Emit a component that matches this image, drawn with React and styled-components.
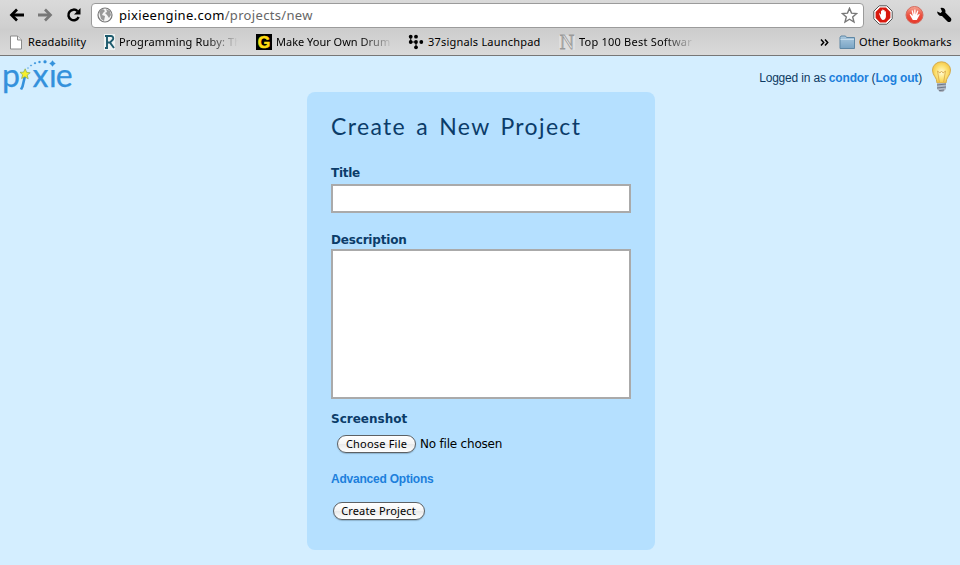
import React from "react";
import styled, { createGlobalStyle } from "styled-components";

const Global = createGlobalStyle`
  * { box-sizing: border-box; }
  body { margin: 0; background: #d4eeff; overflow: hidden; }
  svg { display: block; flex: none; }
`;
const Screen = styled.div`
  width: 960px; height: 565px; background: #d4eeff; color: #000;
  font-family: "Noto Sans", "Open Sans", sans-serif;
`;
const Chrome = styled.header`
  height: 56px; border-bottom: 1px solid #777;
  background: linear-gradient(#dadada, #cfcfcf 28px, #cdcdcd 29px, #dadada);
`;
const Toolbar = styled.div`
  height: 28px; display: flex; align-items: center; padding: 2px 8px 0 8px;
`;
const NavIcon = styled.div`
  width: 28px; display: flex; justify-content: flex-start;
`;
const AddressBar = styled.div`
  width: 773px; height: 25px; margin-left: -1px; display: flex; align-items: center;
  padding: 0 5px; background: #fff; border: 1px solid #9b9b9b; border-radius: 4px;
`;
const Url = styled.span`
  flex: 1; margin-left: 6px; white-space: nowrap; color: #666;
  font-size: 13px; line-height: 18px; letter-spacing: 0.33px; padding-bottom: 1px;
  b { font-weight: 400; color: #000; }
`;
const Extensions = styled.div`
  flex: 1; display: flex; align-items: center; justify-content: space-between; padding-left: 9px;
`;
const BookmarkBar = styled.nav`
  height: 27px; display: flex; align-items: center; padding: 1px 8px 0 9px;
`;
const Bookmark = styled.div`
  display: flex; align-items: center; flex: none; width: ${(p) => p.$width}px;
`;
const BookmarkLabel = styled.span`
  margin-left: ${(p) => p.$gap ?? 4}px; white-space: nowrap; font-size: 11px; line-height: 16px;
  letter-spacing: ${(p) => p.$spacing || 0}px;
  mask-image: ${(p) => (p.$fade ? `linear-gradient(90deg, #000 ${p.$fade - 32}px, transparent ${p.$fade}px)` : "none")};
`;
const Spacer = styled.div`flex: 1;`;
const PageHeader = styled.div`
  height: 36px; display: flex; justify-content: space-between; padding: 0 8px 0 0;
`;
const Account = styled.div`
  display: flex; align-items: flex-start; color: #0d3a62;
  font: 12px/16px "Liberation Sans", sans-serif;
`;
const AccountText = styled.div`
  margin: 14px 9px 0 0; white-space: nowrap; letter-spacing: -0.18px;
`;
const Link = styled.a`
  color: #1c7fdc; font-weight: 700; text-decoration: none;
`;
const Card = styled.form`
  width: 348px; height: 458px; margin: 0 0 0 307px; padding: 19px 24px;
  display: flex; flex-direction: column; align-items: flex-start;
  background: #b5e0ff; border-radius: 8px;
`;
const Heading = styled.h1`
  margin: 0 0 24px; height: 30px; white-space: nowrap; color: #0b3c69;
  font: 400 23px/30px Lato, sans-serif; letter-spacing: 1.35px; word-spacing: 3px;
`;
const Label = styled.label`
  height: 16px; color: #0b3c69; font: 700 12px/16px "DejaVu Sans", sans-serif;
  letter-spacing: ${(p) => p.$spacing || 0}px;
`;
const TitleInput = styled.input`
  width: 300px; height: 29px; margin: 3px 0 19px; padding: 3px;
  border: 2px solid #aaa; border-radius: 0; background: #fff; outline: none;
`;
const DescriptionInput = styled.textarea`
  width: 300px; height: 150px; margin: 1px 0 12px; padding: 3px; resize: none;
  border: 2px solid #aaa; border-radius: 0; background: #fff; outline: none;
`;
const FileRow = styled.div`
  display: flex; align-items: center; height: 20px; margin: 7px 0 17px 6px;
`;
const FileName = styled.span`
  margin-left: 4px; white-space: nowrap; font: 12px/16px "DejaVu Sans", sans-serif; letter-spacing: -0.2px;
`;
const PillButton = styled.button`
  display: block; width: ${(p) => p.$width}px; height: 18px; padding: 0 0 2px; white-space: nowrap; color: #000;
  border: 1px solid #5d6164; border-radius: 9px; box-shadow: 0 1px 1px #6d8ca388;
  background: linear-gradient(#fff, #f4f4f4 50%, #e9e9e9 51%, #fff);
  font: 11px/15px "Noto Sans", sans-serif; letter-spacing: ${(p) => p.$spacing || 0}px;
`;
const AdvancedLink = styled(Link)`
  margin-bottom: 15px; font: 700 12px/16px "Liberation Sans", sans-serif; letter-spacing: -0.22px;
`;
const SubmitRow = styled.div`padding-left: 1.5px;`;

const Arrow = ({ color, flip }) => (
  <svg width="18" height="16" viewBox="0 0 18 16">
    <g transform={flip ? "translate(18 0) scale(-1 1)" : undefined} fill="none" stroke={color}>
      <path d="M4 8H16" strokeWidth="3" /><path d="M9 2.5L3.5 8L9 13.5" strokeWidth="2.7" />
    </g>
  </svg>
);
const Reload = () => (
  <svg width="18" height="16" viewBox="-1 0 18 16">
    <path d="M12.5 4.2A5.3 5.3 0 1 0 13.6 10" fill="none" stroke="#000" strokeWidth="2.5" />
    <path d="M15.5 1V7.5H9Z" />
  </svg>
);
const Globe = () => (
  <svg width="16" height="16" viewBox="0 0 16 16">
    <circle cx="8" cy="8" r="7" fill="#f5f5f5" stroke="#777" strokeWidth="1.2" />
    <path d="M2 4L6 2L8 4L6 6L5 8L8 9L7 14L4 12L3 8Z M9 2L13 4L14 8L12 11L10 8L8 6L10 5Z" fill="#999" />
  </svg>
);
const Star = () => (
  <svg width="17" height="17" viewBox="0 0 17 17">
    <path d="M8.5 1.3L10.5 6.1L15.7 6.5L11.7 9.9L13 15L8.5 12.2L4 15L5.3 9.9L1.3 6.5L6.5 6.1Z" fill="#fff" stroke="#777" strokeWidth="1.4" />
  </svg>
);
const handPath = "M6 10L5 7.5Q5.6 6.7 6.4 8L7 8.8V5Q7.6 4.2 8.2 5V8V3.8Q8.8 3 9.4 3.8V8V4.2Q10 3.6 10.6 4.3V8.2V5.5Q11.3 4.8 11.9 5.5V11Q11.2 14 9 14Q7 13.7 6 10Z";
const StopHand = () => (
  <svg width="20" height="20" viewBox="0 0 20 20">
    <path d="M6.2 .8H13.8L19.2 6.2V13.8L13.8 19.2H6.2L.8 13.8V6.2Z" fill="#fff" stroke="#555" />
    <path d="M7 2.6H13L17.4 7V13L13 17.4H7L2.6 13V7Z" fill="#d8180d" />
    <path d={handPath} fill="#fff" transform="translate(1 1)" />
  </svg>
);
const RoundHand = () => (
  <svg width="19" height="20" viewBox="0 0 19 20">
    <defs><linearGradient id="rh" x2="0" y2="1"><stop stopColor="#f7a896" /><stop offset=".5" stopColor="#ec5140" /><stop offset="1" stopColor="#e6372a" /></linearGradient></defs>
    <circle cx="9.5" cy="10" r="8.5" fill="url(#rh)" stroke="#d46b5e" />
    <path d="M7.8 15L4.6 9.5L5.5 8.8L7.7 11L6.6 5.5L7.7 5.2L9 9.5L9.3 4.6H10.5L10.6 9.5L12.3 5.5L13.3 6L12.2 10.5L14.2 8.8L14.8 9.6L11.8 15Z" fill="#fff" />
  </svg>
);
const Wrench = () => (
  <svg width="16" height="16" viewBox="0 0 16 16">
    <path d="M1 4.5L4.6 6L6 4.4L4.5 .9Q8.6 .1 9.5 4.1L9.3 5.6L15 11.2Q16 13 14.6 14.4Q13 15.6 11.5 14.4L6 8.9Q2 9.5 1 4.5Z" />
  </svg>
);
const PageIcon = () => (
  <svg width="14" height="15" viewBox="0 0 14 15">
    <path d="M1.5 1H8.5L12.5 5V14H1.5Z" fill="#fff" stroke="#8b8b8b" /><path d="M8.5 1V5H12.5" fill="#eee" stroke="#8b8b8b" />
  </svg>
);
const RIcon = () => (
  <svg width="11" height="16" viewBox="0 0 11 16">
    <path d="M0 0H11V16H0Z" fill="#eef2f2" />
    <path d="M1 2H7Q10 2.5 9 5.5L6 8.5L10 14M3 2V14M1 14H4M3 8.5H6" fill="none" stroke="#1d5a6c" strokeWidth="1.9" />
  </svg>
);
const GIcon = () => (
  <svg width="16" height="16" viewBox="0 0 16 16">
    <path d="M0 0H16V16H0Z" />
    <text x="8" y="13.6" textAnchor="middle" fontFamily="Liberation Sans" fontWeight="700" fontSize="16" fill="#ffdd13" stroke="#ffdd13" strokeWidth=".6">G</text>
  </svg>
);
const dots = [[2.7, 2.7], [8, 2.7], [2.7, 8], [8, 8], [13.3, 8], [8, 13.3]];
const DotsIcon = () => (
  <svg width="16" height="16" viewBox="0 0 16 16">
    <path d="M2.7 2.7V8H8V13.3" fill="none" stroke="#222" strokeWidth="1.2" />
    {dots.map(([x, y]) => <circle key={x + "-" + y} cx={x} cy={y} r="1.9" />)}
  </svg>
);
const NIcon = () => (
  <svg width="16" height="17" viewBox="0 0 16 17">
    <path d="M0 1H16V16H0Z" fill="#dedede" />
    <text x="8" y="15" textAnchor="middle" fontFamily="Liberation Serif" fontSize="20" fill="#eee" stroke="#999" strokeWidth=".8">N</text>
  </svg>
);
const Folder = () => (
  <svg width="17" height="15" viewBox="0 0 17 15">
    <defs><linearGradient id="fo" x2="0" y2="1"><stop stopColor="#abc9df" /><stop offset="1" stopColor="#79a4c4" /></linearGradient></defs>
    <path d="M1 13.5V2.5L2 1H6.5L7.5 2.5H15.5V13.5Z" fill="url(#fo)" stroke="#5e87a5" /><path d="M1.5 4.5H15" stroke="#c5dceb" />
  </svg>
);
const Logo = () => (
  <svg width="80" height="40" viewBox="0 0 80 40">
    <g fill="#3391dc" stroke="#3391dc" strokeWidth=".25" fontFamily="Lato" fontSize="32">
      <text x="1.9" y="30.5">p</text><text x="32.5" y="30.5">x</text><text x="49" y="30.5">ı</text><text x="55.7" y="30.5">e</text>
      <circle cx="28" cy="12" r=".5" /><circle cx="31" cy="9.5" r=".7" /><circle cx="35" cy="7.2" r=".9" /><circle cx="39.5" cy="6" r="1.1" /><circle cx="45" cy="5.7" r="1.5" />
      <path d="M52.5 4.5L53.8 6.2L55.5 7.5L53.8 8.8L52.5 10.5L51.2 8.8L49.5 7.5L51.2 6.2Z" />
    </g>
    <path d="M25 20L22.5 30.5L21 33.5" fill="none" stroke="#3391dc" strokeWidth="2.6" />
    <path d="M25.2 12.8L26.6 16.3L30.2 16.8L27.2 19.1L28.2 22.8L24.9 20.7L21.6 22.5L22.6 18.8L20 16.3L23.5 16.2Z" fill="#f7ef2b" stroke="#86a84e" strokeWidth=".7" />
  </svg>
);
const Bulb = () => (
  <svg width="21" height="38" viewBox="0 -1 21 38">
    <defs><radialGradient id="bu"><stop stopColor="#fffbd9" /><stop offset=".55" stopColor="#fde57c" /><stop offset="1" stopColor="#f6cb49" /></radialGradient></defs>
    <path d="M6 26C6 20 1.5 19 1.5 13A9 8.2 0 0 1 19.5 13C19.5 19 15 20 15 26Z" fill="url(#bu)" stroke="#d3ab50" />
    <path d="M8.3 25L6.5 14L9 16L10.5 14L12 16L14.5 14L12.7 25" fill="none" stroke="#d6a648" strokeWidth=".8" />
    <path d="M6 26H15V32L12 35H9L6 32Z" fill="#b0b8c3" /><path d="M6 28L15 27M6 31L15 30M8 33.7L13 33" stroke="#6d7787" />
  </svg>
);

export default function App() {
  return (
    <Screen>
      <Global />
      <Chrome>
        <Toolbar>
          <NavIcon><Arrow color="#000" /></NavIcon>
          <NavIcon><Arrow color="#777" flip /></NavIcon>
          <NavIcon><Reload /></NavIcon>
          <AddressBar>
            <Globe />
            <Url><b>pixieengine.com</b>/projects/new</Url>
            <Star />
          </AddressBar>
          <Extensions><StopHand /><RoundHand /><Wrench /></Extensions>
        </Toolbar>
        <BookmarkBar>
          <Bookmark $width={95}><PageIcon /><BookmarkLabel $gap={5} $spacing={0.1}>Readability</BookmarkLabel></Bookmark>
          <Bookmark $width={152}><RIcon /><BookmarkLabel $spacing={0.15} $fade={119}>Programming Ruby: Th</BookmarkLabel></Bookmark>
          <Bookmark $width={152}><GIcon /><BookmarkLabel $fade={117}>Make Your Own Drum</BookmarkLabel></Bookmark>
          <Bookmark $width={151}><DotsIcon /><BookmarkLabel $spacing={0.2}>37signals Launchpad</BookmarkLabel></Bookmark>
          <Bookmark $width={150}><NIcon /><BookmarkLabel $spacing={0.22} $fade={116}>Top 100 Best Softwar</BookmarkLabel></Bookmark>
          <Spacer />
          <Bookmark $width={19}><svg width="9" height="10"><path d="M1 2.5L3.7 5.5L1 8.5M5 2.5L7.7 5.5L5 8.5" fill="none" stroke="#000" strokeWidth="1.5" /></svg></Bookmark>
          <Bookmark $width={113}><Folder /><BookmarkLabel $gap={3} $spacing={0.08}>Other Bookmarks</BookmarkLabel></Bookmark>
        </BookmarkBar>
      </Chrome>
      <PageHeader>
        <Logo />
        <Account>
          <AccountText>Logged in as <Link>condor</Link> (<Link>Log out</Link>)</AccountText>
          <Bulb />
        </Account>
      </PageHeader>
      <Card>
        <Heading>Create a New Project</Heading>
        <Label htmlFor="title" $spacing={-0.3}>Title</Label>
        <TitleInput id="title" />
        <Label htmlFor="description" $spacing={-0.18}>Description</Label>
        <DescriptionInput id="description" />
        <Label>Screenshot</Label>
        <FileRow>
          <PillButton type="button" $width={79} $spacing={0.2}>Choose File</PillButton>
          <FileName>No file chosen</FileName>
        </FileRow>
        <AdvancedLink>Advanced Options</AdvancedLink>
        <SubmitRow><PillButton type="button" $width={92} $spacing={0.15}>Create Project</PillButton></SubmitRow>
      </Card>
    </Screen>
  );
}
